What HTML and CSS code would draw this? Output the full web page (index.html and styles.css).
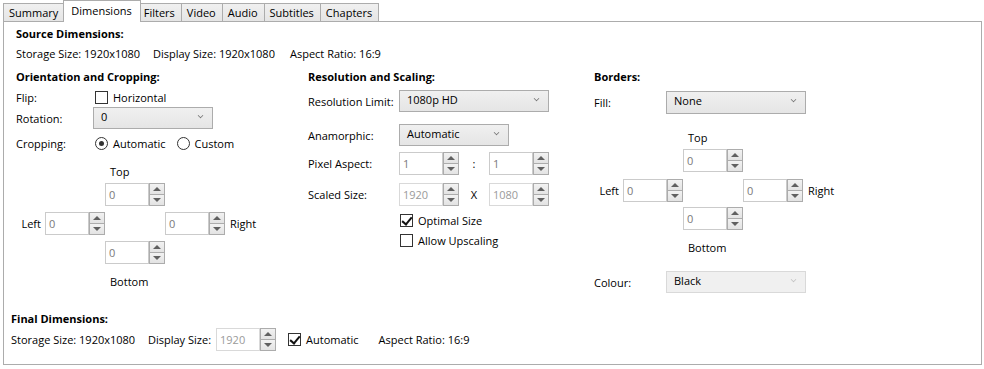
FILE: index.html
```html
<!DOCTYPE html>
<html>
<head>
<meta charset="UTF-8">
<title>Dimensions</title>
<link rel="stylesheet" href="styles.css">
</head>
<body>

<div class="tabs">
<div class="tab">Summary</div>
<div class="tab active">Dimensions</div>
<div class="tab">Filters</div>
<div class="tab">Video</div>
<div class="tab">Audio</div>
<div class="tab">Subtitles</div>
<div class="tab">Chapters</div>
</div>

<div class="panel">

<div class="main">

<div class="heading h-source">Source Dimensions:</div>
<div class="info">
<span>Storage Size: 1920x1080</span>
<span>Display Size: 1920x1080</span>
<span>Aspect Ratio: 16:9</span>
</div>

<div class="columns">

<!-- orientation / cropping -->
<div class="col col-left">
<div class="heading">Orientation and Cropping:</div>
<div class="row r-flip">
<span class="lbl">Flip:</span>
<span class="check"></span><span class="opt">Horizontal</span>
</div>
<div class="row r-rot">
<span class="lbl">Rotation:</span>
<div class="combo w-rot">0<span class="chev"></span></div>
</div>
<div class="row r-crop">
<span class="lbl">Cropping:</span>
<span class="radio on"></span><span class="opt">Automatic</span>
<span class="radio r2"></span><span class="opt">Custom</span>
</div>

<div class="cross cross-crop">
<span class="c-top">Top</span>
<div class="spin c-t"><div class="spin-box">0</div><div class="spin-btns"><span class="up"></span><span class="down"></span></div></div>
<span class="c-left">Left</span>
<div class="spin c-l"><div class="spin-box">0</div><div class="spin-btns"><span class="up"></span><span class="down"></span></div></div>
<div class="spin c-r"><div class="spin-box">0</div><div class="spin-btns"><span class="up"></span><span class="down"></span></div></div>
<span class="c-right">Right</span>
<div class="spin c-b"><div class="spin-box">0</div><div class="spin-btns"><span class="up"></span><span class="down"></span></div></div>
<span class="c-bottom">Bottom</span>
</div>
</div>

<!-- resolution / scaling -->
<div class="col col-mid">
<div class="heading">Resolution and Scaling:</div>
<div class="row r-limit">
<span class="lbl">Resolution Limit:</span>
<div class="combo w-limit">1080p HD<span class="chev"></span></div>
</div>
<div class="row r-anam">
<span class="lbl">Anamorphic:</span>
<div class="combo w-anam">Automatic<span class="chev"></span></div>
</div>
<div class="row r-par">
<span class="lbl">Pixel Aspect:</span>
<div class="spin"><div class="spin-box">1</div><div class="spin-btns"><span class="up"></span><span class="down"></span></div></div>
<span class="sep">:</span>
<div class="spin"><div class="spin-box">1</div><div class="spin-btns"><span class="up"></span><span class="down"></span></div></div>
</div>
<div class="row r-scaled">
<span class="lbl">Scaled Size:</span>
<div class="spin off"><div class="spin-box">1920</div><div class="spin-btns"><span class="up"></span><span class="down"></span></div></div>
<span class="sep">X</span>
<div class="spin off"><div class="spin-box">1080</div><div class="spin-btns"><span class="up"></span><span class="down"></span></div></div>
</div>
<div class="row r-optimal">
<span class="lbl"></span>
<span class="check on"></span><span class="opt">Optimal Size</span>
</div>
<div class="row r-upscale">
<span class="lbl"></span>
<span class="check"></span><span class="opt">Allow Upscaling</span>
</div>
</div>

<!-- borders -->
<div class="col col-right">
<div class="heading">Borders:</div>
<div class="row r-fill">
<span class="lbl">Fill:</span>
<div class="combo w-fill">None<span class="chev"></span></div>
</div>

<div class="cross cross-border">
<span class="c-top">Top</span>
<div class="spin c-t"><div class="spin-box">0</div><div class="spin-btns"><span class="up"></span><span class="down"></span></div></div>
<span class="c-left">Left</span>
<div class="spin c-l"><div class="spin-box">0</div><div class="spin-btns"><span class="up"></span><span class="down"></span></div></div>
<div class="spin c-r"><div class="spin-box">0</div><div class="spin-btns"><span class="up"></span><span class="down"></span></div></div>
<span class="c-right">Right</span>
<div class="spin c-b"><div class="spin-box">0</div><div class="spin-btns"><span class="up"></span><span class="down"></span></div></div>
<span class="c-bottom">Bottom</span>
</div>

<div class="row r-colour">
<span class="lbl">Colour:</span>
<div class="combo w-fill disabled">Black<span class="chev"></span></div>
</div>
</div>

</div>
</div>

<!-- final -->
<div class="heading h-final">Final Dimensions:</div>
<div class="final-row">
<span class="f-storage">Storage Size: 1920x1080</span>
<span class="f-display">Display Size:</span>
<div class="spin off"><div class="spin-box">1920</div><div class="spin-btns"><span class="up"></span><span class="down"></span></div></div>
<span class="check on f-check"></span><span class="opt">Automatic</span>
<span class="f-aspect">Aspect Ratio: 16:9</span>
</div>

</div>

</body>
</html>
```

FILE: styles.css
```css
body{
    margin:0;
    background:#fff;
    font-family:"Segoe UI","Open Sans","Noto Sans",sans-serif;
    font-size:11px;
    color:#000;
    white-space:nowrap;
}

/* tab strip */
.tabs{
    display:flex;
    align-items:flex-end;
    height:21px;
    padding-left:3px;
}

.tab{
    height:17px;
    line-height:17px;
    padding:0 6px 0 5px;
    border:1px solid #acacac;
    border-bottom:none;
    background:linear-gradient(#f0f0f0,#e5e5e5);
    margin-left:-1px;
}

.tab:first-child{
    margin-left:0;
}

.tab.active{
    position:relative;
    z-index:1;
    height:21px;
    line-height:20px;
    margin:0 -2px -1px -2px;
    padding:0 8px 0 7px;
    background:#fff;
}

.panel{
    box-sizing:border-box;
    height:344px;
    margin:0 2px 0 3px;
    border:1px solid #acacac;
    padding-left:7px;
}

.main{
    margin-left:5px;
}

.heading{
    font-weight:bold;
    height:20px;
    line-height:20px;
}

.h-source{
    margin-top:3px;
    height:18px;
    line-height:18px;
}

.info{
    display:grid;
    grid-template-columns:137px 137px auto;
    height:18px;
    line-height:18px;
    margin-top:2px;
}

.columns{
    display:flex;
    margin-top:4px;
}

.col{
    display:flex;
    flex-direction:column;
}

.col-left{ width:292px; }
.col-mid{ width:286px; }
.col-right{ width:250px; }

.row{
    display:flex;
    align-items:center;
}

.lbl{
    flex:none;
}

.col-left .lbl{ width:77px; }
.col-mid .lbl{ width:91px; }
.col-right .lbl{ width:72px; }

.opt{
    margin-left:5px;
}

/* left column rows */
.r-flip{ height:20px; }
.r-flip .check{ margin-left:2px; }
.r-rot{ height:22px; }
.r-crop{ height:22px; margin-top:3px; }
.r-crop .radio{ margin-left:2px; }
.r-crop .r2{ margin-left:11px; }

/* middle column rows */
.r-limit{ height:22px; margin-top:3px; }
.r-anam{ height:22px; margin-top:12px; }
.r-par{ height:23px; margin-top:6px; }
.r-scaled{ height:23px; margin-top:8px; }
.r-optimal{ height:15px; margin-top:7px; }
.r-upscale{ height:15px; margin-top:5px; }
.r-optimal .check,
.r-upscale .check{ margin-left:1px; }

.sep{
    width:30px;
    text-align:center;
}

/* right column rows */
.r-fill{ height:23px; margin-top:4px; }
.r-colour{ height:22px; margin-top:15px; }

/* combo boxes */
.combo{
    box-sizing:border-box;
    position:relative;
    height:22px;
    line-height:18px;
    padding-left:7px;
    border:1px solid #acacac;
    background:linear-gradient(#f0f0f0,#e5e5e5);
}

.combo .chev{
    position:absolute;
    right:9px;
    top:8px;
    width:4px;
    height:4px;
    border-right:1px solid #707070;
    border-bottom:1px solid #707070;
    transform:rotate(45deg) scale(0.8);
    transform-origin:center;
    margin-top:-3px;
}

.combo.disabled{
    border-color:#d9d9d9;
    background:#f0f0f0;
}

.combo.disabled .chev{
    border-color:#c0c0c0;
}

.w-rot{ width:120px; }
.w-limit{ width:150px; }
.w-anam{ width:110px; }
.w-fill{ width:140px; height:23px; }
.r-colour .w-fill{ height:22px; }

/* check boxes and radios */
.check{
    box-sizing:border-box;
    flex:none;
    position:relative;
    width:13px;
    height:13px;
    border:1px solid #333;
    background:#fff;
}

.check.on::after{
    content:"";
    position:absolute;
    left:3px;
    top:0px;
    width:4px;
    height:8px;
    border-right:2px solid #111;
    border-bottom:2px solid #111;
    transform:rotate(40deg);
}

.radio{
    box-sizing:border-box;
    flex:none;
    position:relative;
    width:13px;
    height:13px;
    border:1px solid #333;
    border-radius:50%;
    background:#fff;
}

.radio.on::after{
    content:"";
    position:absolute;
    left:3px;
    top:3px;
    width:5px;
    height:5px;
    border-radius:50%;
    background:#333;
}

/* spinners */
.spin{
    display:flex;
    width:60px;
    height:23px;
    flex:none;
}

.spin-box{
    box-sizing:border-box;
    width:44px;
    height:23px;
    line-height:21px;
    padding-left:3px;
    border:1px solid #cbcbcb;
    background:#fff;
    color:#7a7a7a;
}

.spin.off .spin-box{
    color:#9a9a9a;
    border-color:#d9d9d9;
}

.spin-btns{
    display:flex;
    flex-direction:column;
    width:16px;
}

.spin-btns span{
    box-sizing:border-box;
    position:relative;
    height:12px;
    border:1px solid #acacac;
    background:linear-gradient(#f2f2f2,#e3e3e3);
}

.spin-btns .down{
    margin-top:-1px;
}

.spin-btns span::after{
    content:"";
    position:absolute;
    left:3px;
    top:3px;
    border-left:4px solid transparent;
    border-right:4px solid transparent;
}

.spin-btns .up::after{
    border-bottom:4px solid #606060;
}

.spin-btns .down::after{
    border-top:4px solid #606060;
}

/* crop / border crosses */
.cross{
    display:grid;
    grid-template-columns:29px 60px 60px 60px auto;
}

.cross-crop{
    margin-top:10px;
    grid-template-rows:16px 3px 23px 6px 23px 6px 23px 10px 16px;
}

.cross-border{
    margin-top:16px;
    grid-template-rows:16px 3px 23px 7px 23px 5px 23px 10px 16px;
}

.cross span{
    line-height:16px;
}

.c-top{ grid-row:1; grid-column:3; padding-left:5px; }
.c-t{ grid-row:3; grid-column:3; }
.c-left{ grid-row:5; grid-column:1; justify-self:end; align-self:center; padding-right:4px; }
.c-l{ grid-row:5; grid-column:2; }
.c-r{ grid-row:5; grid-column:4; }
.c-right{ grid-row:5; grid-column:5; align-self:center; padding-left:5px; }
.c-b{ grid-row:7; grid-column:3; }
.c-bottom{ grid-row:9; grid-column:3; padding-left:5px; }

/* final dimensions */
.h-final{
    margin-top:17px;
    height:17px;
    line-height:17px;
}

.final-row{
    display:flex;
    align-items:center;
    height:24px;
}

.f-storage{ width:137px; }
.f-display{ margin-right:5px; }
.f-check{ margin-left:12px; }
.f-aspect{ margin-left:20px; }
```
